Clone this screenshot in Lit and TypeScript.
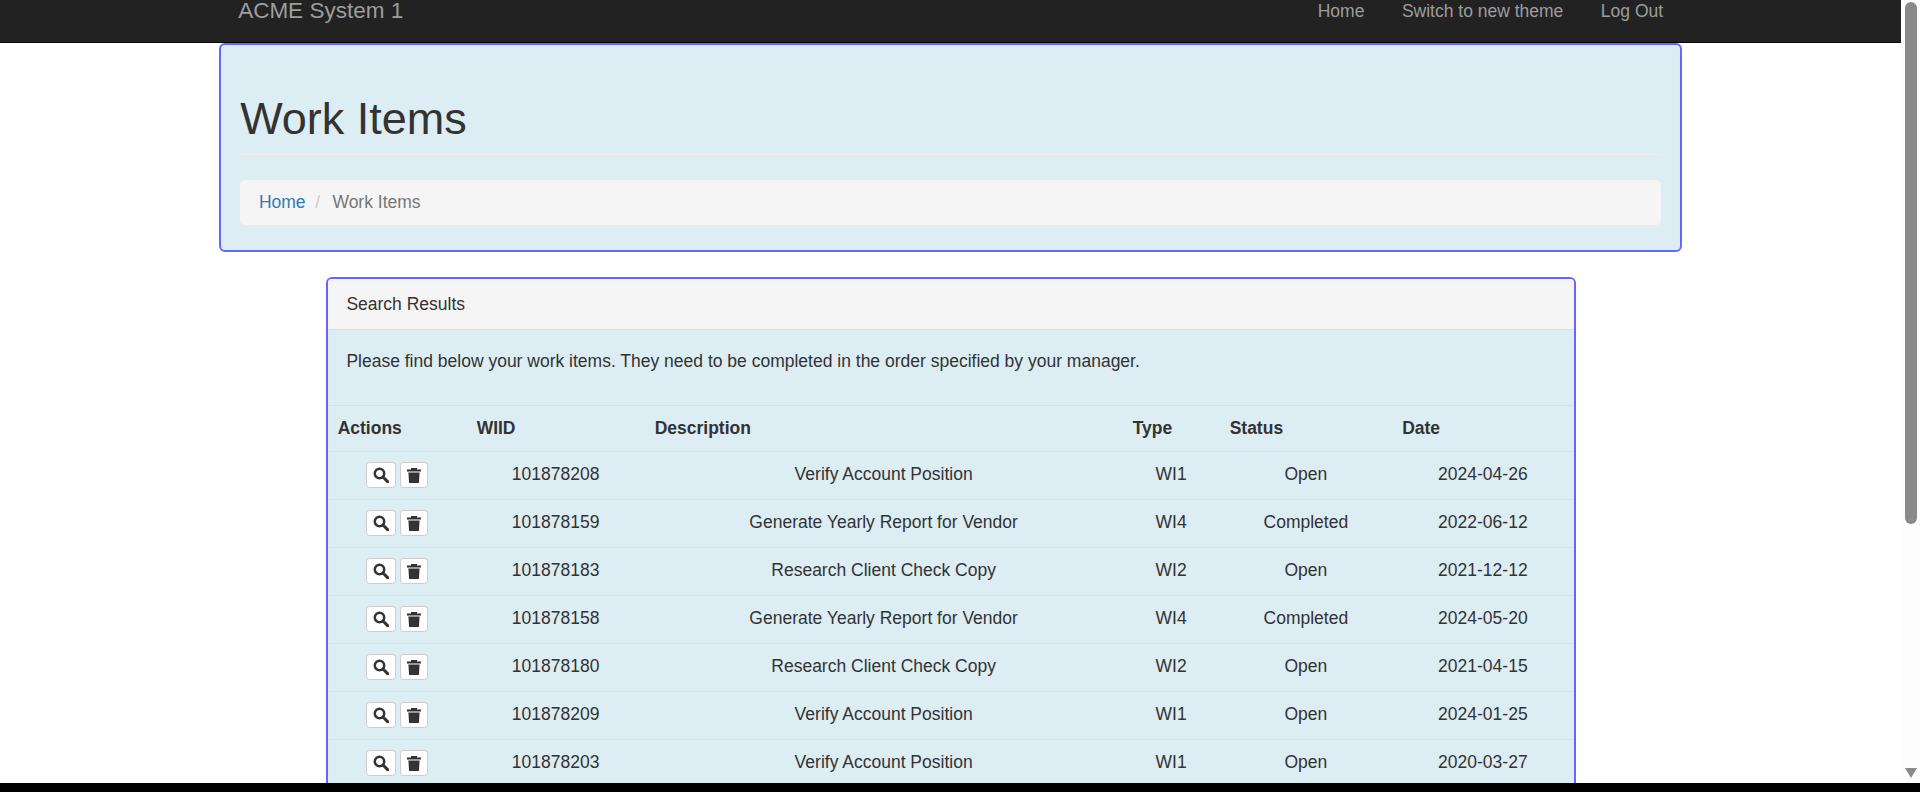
import { LitElement, css, html } from 'lit';
import { customElement } from 'lit/decorators.js';

interface WorkItem {
  wiid: string;
  description: string;
  type: string;
  status: string;
  date: string;
}

const ITEMS: WorkItem[] = [
  { wiid: '101878208', description: 'Verify Account Position', type: 'WI1', status: 'Open', date: '2024-04-26' },
  { wiid: '101878159', description: 'Generate Yearly Report for Vendor', type: 'WI4', status: 'Completed', date: '2022-06-12' },
  { wiid: '101878183', description: 'Research Client Check Copy', type: 'WI2', status: 'Open', date: '2021-12-12' },
  { wiid: '101878158', description: 'Generate Yearly Report for Vendor', type: 'WI4', status: 'Completed', date: '2024-05-20' },
  { wiid: '101878180', description: 'Research Client Check Copy', type: 'WI2', status: 'Open', date: '2021-04-15' },
  { wiid: '101878209', description: 'Verify Account Position', type: 'WI1', status: 'Open', date: '2024-01-25' },
  { wiid: '101878203', description: 'Verify Account Position', type: 'WI1', status: 'Open', date: '2020-03-27' },
];

const searchIcon = html`<svg class="icon" viewBox="0 0 16 16" aria-hidden="true">
  <circle cx="6.5" cy="6.5" r="4.7" fill="none" stroke="currentColor" stroke-width="2.5"></circle>
  <path d="M10 10l4.6 4.6" fill="none" stroke="currentColor" stroke-width="3" stroke-linecap="round"></path>
</svg>`;

const trashIcon = html`<svg class="icon" viewBox="0 0 16 16" aria-hidden="true">
  <path fill="currentColor" d="M5 1h6v1.4h4v2.2H1V2.4h4zM2.4 5.6h11.2l-.7 10.4H3.1z"></path>
</svg>`;

@customElement('app-root')
export class AppRoot extends LitElement {
  static styles = css`
    :host {
      display: block;
      height: 792px;
      overflow: hidden;
      background: #000;
      color: #333;
      font-family: 'Liberation Sans', Arial, sans-serif;
      font-size: 17.5px;
      line-height: 25px;
    }

    * {
      box-sizing: border-box;
    }

    .viewport {
      display: flex;
      height: 783px;
      background: #fff;
      overflow: hidden;
    }

    .page {
      flex: 1;
      min-width: 0;
      overflow: hidden;
    }

    .scrolled {
      margin-top: -20px;
    }

    .scrollbar {
      flex: none;
      width: 18.75px;
      display: flex;
      flex-direction: column;
      padding: 2px 3px 5px 3.75px;
      background: #fdfdfd;
    }

    .thumb {
      height: 522px;
      background: #8a8a8a;
      border-radius: 6px;
    }

    .arrow {
      margin-top: auto;
      width: 12px;
      height: 10px;
      fill: #8a8a8a;
      display: block;
    }

    .navbar {
      height: 63px;
      background: #222;
      border-bottom: 1px solid #080808;
    }

    .nav-inner {
      width: 1462.5px;
      margin: 0 auto;
      display: flex;
      justify-content: space-between;
      color: #9d9d9d;
    }

    .brand {
      padding: 17.75px 18.75px;
      font-size: 22.5px;
      line-height: 25px;
    }

    .nav-links {
      display: flex;
    }

    .nav-links a {
      padding: 18.75px;
      color: #9d9d9d;
      text-decoration: none;
    }

    .box {
      border: 2px solid #6666ff;
      border-radius: 6px;
      background: #dcedf4;
    }

    .hero {
      width: 1462.5px;
      margin: 0 auto;
      padding: 48.5px 18.75px 24.5px;
    }

    h1 {
      margin: 0;
      padding-bottom: 11.25px;
      border-bottom: 1.25px solid #eeeeee;
      font-size: 45px;
      font-weight: 400;
      line-height: 49.5px;
      color: #333;
    }

    .breadcrumb {
      height: 45px;
      margin-top: 25px;
      padding: 10px 18.75px;
      display: flex;
      gap: 6.25px;
      background: #f5f5f5;
      border-radius: 5px;
      color: #777;
    }

    .breadcrumb a {
      color: #337ab7;
      text-decoration: none;
    }

    .breadcrumb .sep {
      color: #ccc;
      padding: 0 4.5px 0 2px;
      margin: 0 1.5px;
    }

    .results {
      width: 1250px;
      margin: 25px auto 0;
      overflow: hidden;
    }

    .results-head {
      padding: 13px 18.75px 12.5px;
      background: #f5f5f5;
      border-bottom: 1.25px solid #ddd;
    }

    .results-body {
      padding: 18.75px;
    }

    .results-body p {
      margin: 0 0 12.5px;
    }

    table {
      width: 100%;
      table-layout: fixed;
      border-collapse: collapse;
    }

    th {
      height: 45.5px;
      padding: 0 10px 1px;
      text-align: left;
      font-weight: 700;
      border-top: 1.25px solid #ddd;
      border-bottom: 1.25px solid #ddd;
    }

    td {
      height: 48px;
      padding: 0 10px 1px;
      text-align: center;
      border-bottom: 1.25px solid #ddd;
    }

    .actions {
      display: flex;
      justify-content: center;
      align-items: center;
      gap: 4.6px;
    }

    .btn {
      height: 26.5px;
      padding: 0;
      display: flex;
      align-items: center;
      justify-content: center;
      background: #fff;
      border: 1.25px solid #ccc;
      border-radius: 3.75px;
      color: #333;
    }

    .btn.search {
      width: 29.4px;
    }

    .btn.trash {
      width: 27.4px;
    }

    .icon {
      width: 16px;
      height: 16px;
      display: block;
    }
  `;

  private renderRow(item: WorkItem) {
    return html`
      <tr>
        <td>
          <div class="actions">
            <button class="btn search">${searchIcon}</button>
            <button class="btn trash">${trashIcon}</button>
          </div>
        </td>
        <td>${item.wiid}</td>
        <td>${item.description}</td>
        <td>${item.type}</td>
        <td>${item.status}</td>
        <td>${item.date}</td>
      </tr>
    `;
  }

  render() {
    return html`
      <div class="viewport">
        <div class="page">
          <div class="scrolled">
            <nav class="navbar">
              <div class="nav-inner">
                <div class="brand">ACME System 1</div>
                <div class="nav-links">
                  <a href="#">Home</a>
                  <a href="#">Switch to new theme</a>
                  <a href="#">Log Out</a>
                </div>
              </div>
            </nav>

            <section class="box hero">
              <h1>Work Items</h1>
              <div class="breadcrumb">
                <a href="#">Home</a>
                <span class="sep">/</span>
                <span>Work Items</span>
              </div>
            </section>

            <section class="box results">
              <div class="results-head">Search Results</div>
              <div class="results-body">
                <p>Please find below your work items. They need to be completed in the order specified by your manager.</p>
              </div>
              <table>
                <colgroup>
                  <col style="width:139px" />
                  <col style="width:178px" />
                  <col style="width:478px" />
                  <col style="width:97px" />
                  <col style="width:172.5px" />
                  <col />
                </colgroup>
                <thead>
                  <tr>
                    <th>Actions</th>
                    <th>WIID</th>
                    <th>Description</th>
                    <th>Type</th>
                    <th>Status</th>
                    <th>Date</th>
                  </tr>
                </thead>
                <tbody>
                  ${ITEMS.map((item) => this.renderRow(item))}
                </tbody>
              </table>
            </section>
          </div>
        </div>
        <div class="scrollbar">
          <div class="thumb"></div>
          <svg class="arrow" viewBox="0 0 12 10" aria-hidden="true"><polygon points="0,0 12,0 6,10"></polygon></svg>
        </div>
      </div>
    `;
  }
}
